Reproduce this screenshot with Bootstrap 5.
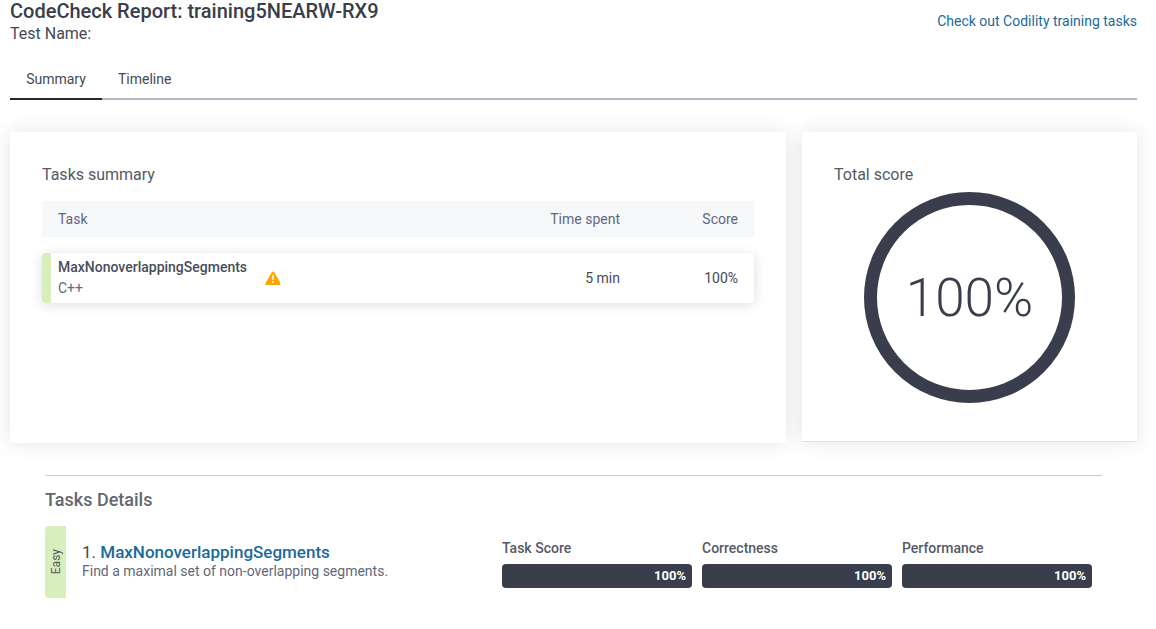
<!DOCTYPE html>
<html lang="en">
<head>
    <meta charset="UTF-8">
    <meta name="viewport" content="width=device-width, initial-scale=1.0">
    <title>CodeCheck Report</title>
    <link href="https://cdn.jsdelivr.net/npm/bootstrap@5.3.2/dist/css/bootstrap.min.css" rel="stylesheet">
    <style>
        body {
            font-family: Roboto, "Liberation Sans", sans-serif;
            color: #454955;
            font-size: 14px;
            background: #fff;
        }

        a { text-decoration: none; }

        .report-page { padding: 0 19px 0 10px; }

        .report-head { height: 58px; }

        .report-title {
            font-size: 20px;
            font-weight: 500;
            line-height: 22px;
            margin: 0;
            color: #3a3e4a;
        }

        .report-sub { font-size: 16px; line-height: 24px; }

        .training-link { color: #1c6a9c; margin-top: 13px; line-height: 17px; }

        .tab-bar { height: 42px; border-bottom: 2px solid #b4bac4; }

        .tab-item {
            color: #454955;
            padding: 12px 16px 0;
            height: 42px;
            line-height: 18px;
        }

        .tab-item.is-active { width: 92px; border-bottom: 2px solid #26282e; }

        .cards-row { margin-top: 32px; gap: 16px; align-items: flex-start; }

        .panel-box {
            background: #fff;
            border-radius: 3px;
            box-shadow: 0 0 20px rgba(40, 45, 70, 0.12);
        }

        .panel-tasks { width: 776px; height: 311px; padding: 33px 32px 32px; }

        .panel-score {
            width: 335px;
            height: 310px;
            padding: 33px 32px 32px;
            border-bottom: 1px solid #dcdfec;
            border-radius: 3px 3px 0 0;
            position: relative;
        }

        .panel-heading { font-size: 16px; line-height: 20px; color: #565a66; }

        .summary-head {
            background: #f7f8fa;
            height: 36px;
            margin-top: 16px;
            padding: 0 16px;
            color: #63677a;
        }

        .summary-row {
            height: 50px;
            margin-top: 16px;
            padding: 0 16px 0 7px;
            border-left: 9px solid #d9eebd;
            border-radius: 4px;
            box-shadow: 0 2px 12px rgba(40, 45, 70, 0.16);
        }

        .cell-time { width: 132px; text-align: right; }
        .cell-score { width: 118px; text-align: right; }

        .task-name { font-weight: 500; line-height: 21px; color: #4a4e5a; }
        .task-lang { line-height: 21px; color: #63677a; }
        .warn-icon { margin-left: 18px; }

        .score-ring { margin-top: 7px; margin-left: 30px; width: 211px; height: 211px; }

        .score-text {
            font-size: 53px;
            font-weight: 350;
            line-height: 1;
            color: #3a3e4c;
        }

        .details-wrap { margin: 32px 35px 0; }

        .details-rule { border-top: 1px solid #c9cccf; height: 14px; }

        .details-title { font-size: 18px; font-weight: 500; line-height: 22px; color: #636770; }

        .detail-row { margin-top: 15px; }

        .level-tag {
            width: 21px;
            height: 72px;
            background: #d9eebd;
            border-radius: 4px 0 0 4px;
            font-size: 12px;
            color: #565a66;
        }

        .level-tag span { writing-mode: vertical-rl; transform: rotate(180deg); }

        .detail-info { width: 436px; padding: 17px 0 0 16px; }

        .detail-name { font-size: 17px; line-height: 19px; }
        .detail-name a { color: #1c6a9c; font-weight: 500; }
        .detail-desc { line-height: 19px; color: #63677a; }

        .meter-col { width: 190px; margin-right: 10px; padding-top: 14px; }
        .meter-label { font-weight: 500; line-height: 17px; color: #565a66; }

        .meter-bar {
            height: 24px;
            margin-top: 7px;
            padding: 0 6px;
            border-radius: 4px;
            background: #3a3e4c;
            color: #fff;
            font-size: 13px;
            font-weight: 700;
        }
    </style>
</head>
<body>
    <div class="report-page">
        <div class="report-head d-flex justify-content-between">
            <div>
                <h1 class="report-title">CodeCheck Report: training5NEARW-RX9</h1>
                <div class="report-sub">Test Name:</div>
            </div>
            <a class="training-link" href="#">Check out Codility training tasks</a>
        </div>

        <div class="tab-bar d-flex">
            <a class="tab-item is-active text-center px-0" href="#">Summary</a>
            <a class="tab-item" href="#">Timeline</a>
        </div>

        <div class="cards-row d-flex">
            <div class="panel-box panel-tasks">
                <div class="panel-heading">Tasks summary</div>
                <div class="summary-head d-flex align-items-center">
                    <div class="flex-grow-1">Task</div>
                    <div class="cell-time">Time spent</div>
                    <div class="cell-score">Score</div>
                </div>
                <div class="summary-row d-flex align-items-center">
                    <div class="flex-grow-1 d-flex align-items-center">
                        <div>
                            <div class="task-name">MaxNonoverlappingSegments</div>
                            <div class="task-lang">C++</div>
                        </div>
                        <svg class="warn-icon" width="16" height="14" viewBox="0 0 16 14">
                            <path fill="#ffa400" stroke="#ffa400" stroke-width="3" stroke-linejoin="round" d="M8 2 2 12.5h12z"/>
                            <rect x="7.2" y="4" width="1.6" height="5" rx=".7" fill="#fff"/>
                            <circle cx="8" cy="11" r="1" fill="#fff"/>
                        </svg>
                    </div>
                    <div class="cell-time">5 min</div>
                    <div class="cell-score">100%</div>
                </div>
            </div>

            <div class="panel-box panel-score">
                <div class="panel-heading">Total score</div>
                <div class="score-ring position-relative">
                    <svg class="d-block" width="211" height="211" viewBox="0 0 211 211">
                        <circle cx="105.5" cy="105.5" r="99" fill="none" stroke="#3a3e4c" stroke-width="13"/>
                    </svg>
                    <div class="score-text position-absolute top-50 start-50 translate-middle">100%</div>
                </div>
            </div>
        </div>

        <div class="details-wrap">
            <div class="details-rule"></div>
            <div class="details-title">Tasks Details</div>
            <div class="detail-row d-flex">
                <div class="level-tag d-flex align-items-center justify-content-center"><span>Easy</span></div>
                <div class="detail-info">
                    <div class="detail-name">1. <a href="#">MaxNonoverlappingSegments</a></div>
                    <div class="detail-desc">Find a maximal set of non-overlapping segments.</div>
                </div>
                <div class="meter-col">
                    <div class="meter-label">Task Score</div>
                    <div class="meter-bar d-flex align-items-center justify-content-end">100%</div>
                </div>
                <div class="meter-col">
                    <div class="meter-label">Correctness</div>
                    <div class="meter-bar d-flex align-items-center justify-content-end">100%</div>
                </div>
                <div class="meter-col">
                    <div class="meter-label">Performance</div>
                    <div class="meter-bar d-flex align-items-center justify-content-end">100%</div>
                </div>
            </div>
        </div>
    </div>
    <script src="https://cdn.jsdelivr.net/npm/bootstrap@5.3.2/dist/js/bootstrap.bundle.min.js"></script>
</body>
</html>
